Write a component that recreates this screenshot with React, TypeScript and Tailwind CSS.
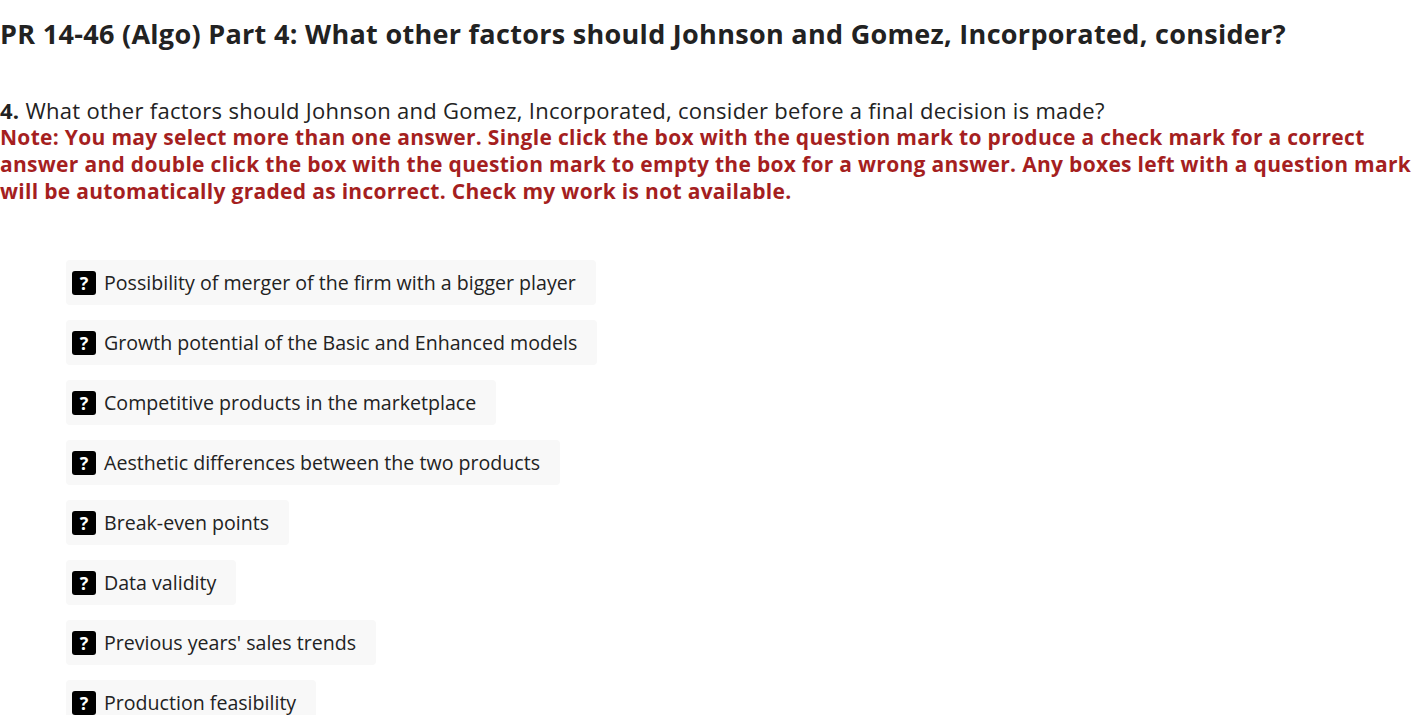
import React from "react";

const options = [
  "Possibility of merger of the firm with a bigger player",
  "Growth potential of the Basic and Enhanced models",
  "Competitive products in the marketplace",
  "Aesthetic differences between the two products",
  "Break-even points",
  "Data validity",
  "Previous years' sales trends",
  "Production feasibility",
];

function QIcon() {
  return (
    <span className="flex h-[24px] w-[24px] shrink-0 items-center justify-center rounded-[3px] bg-black text-[18px] font-bold leading-none text-white">
      ?
    </span>
  );
}

export default function App() {
  return (
    <div
      className="h-[715px] w-[1413px] overflow-hidden bg-white text-[#222]"
      style={{ fontFamily: '"Open Sans", "Liberation Sans", sans-serif' }}
    >
      <h1 className="pt-[16px] text-[27px] font-bold leading-[36px] tracking-[0.3px] text-[#222]">
        PR 14-46 (Algo) Part 4: What other factors should Johnson and Gomez, Incorporated, consider?
      </h1>
      <div className="mt-[45px] leading-[27px]">
        <p className="text-[22px] tracking-[0.28px]">
          <span className="font-bold">4.</span> What other factors should Johnson and Gomez, Incorporated, consider before a final decision is made?
        </p>
        <p className="text-[21px] font-bold tracking-[0.3px] text-[#a51f1f]">
          Note: You may select more than one answer. Single click the box with the question mark to produce a check mark for a correct answer and double click the box with the question mark to empty the box for a wrong answer. Any boxes left with a question mark will be automatically graded as incorrect. Check my work is not available.
        </p>
      </div>
      <div className="ml-[66px] mt-[55px] flex flex-col items-start gap-[15px]">
        {options.map((o) => (
          <div
            key={o}
            className="flex h-[45px] items-center gap-[8px] rounded-[4px] bg-[#f8f8f8] pl-[6px] pr-[20px] text-[19.6px]"
          >
            <QIcon />
            <span>{o}</span>
          </div>
        ))}
      </div>
    </div>
  );
}
